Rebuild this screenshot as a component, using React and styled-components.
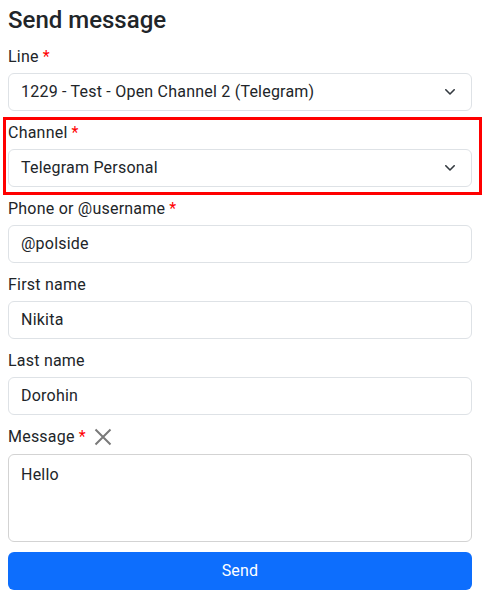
import React from "react";
import styled, { createGlobalStyle } from "styled-components";

const GlobalStyle = createGlobalStyle`
  html, body { margin: 0; padding: 0; background: #fff; }
  body { font-family: Roboto, "Liberation Sans", Arial, sans-serif; color: #212529; }
  * { box-sizing: border-box; }
`;

const Form = styled.form`
  display: flex;
  flex-direction: column;
  gap: 10px;
  width: 464px;
  margin: 0 0 0 8px;
  padding-top: 6px;
`;

const Title = styled.h1`
  margin: 0;
  font-size: 24px;
  font-weight: 500;
  line-height: 1.2;
  color: #212529;
`;

const Group = styled.div`
  position: relative;
  display: flex;
  flex-direction: column;
`;

const Highlight = styled.div`
  position: absolute;
  top: -3.5px;
  left: -5px;
  right: -10px;
  bottom: -8.5px;
  border: 3px solid #ff0000;
  pointer-events: none;
`;

const Label = styled.label`
  display: flex;
  align-items: center;
  font-size: 16px;
  line-height: 24px;
  height: 24px;
  letter-spacing: 0.22px;
  margin-bottom: ${(p) => p.$mb || 4}px;
  color: #212529;
`;

const Required = styled.span`
  color: #ff0000;
  margin-left: 4px;
`;

const ClearButton = styled.button`
  display: inline-flex;
  align-items: center;
  justify-content: center;
  border: 0;
  background: none;
  padding: 0;
  margin-left: 8px;
  width: 18px;
  height: 18px;
  cursor: pointer;
`;

const Input = styled.input`
  height: 38px;
  width: 100%;
  padding: 6px 12px;
  font-family: inherit;
  font-size: 16px;
  line-height: 24px;
  letter-spacing: 0.22px;
  color: #212529;
  border: 1px solid #dee2e6;
  border-radius: 6px;
  background: #fff;
  outline: none;
`;

const SelectBox = styled.div`
  display: flex;
  align-items: center;
  justify-content: space-between;
  height: 38px;
  padding: 6px 16px 6px 12px;
  font-size: 16px;
  line-height: 24px;
  letter-spacing: 0.22px;
  color: #212529;
  border: 1px solid #dee2e6;
  border-radius: 6px;
  background: #fff;
  cursor: pointer;
`;

const TextArea = styled.textarea`
  height: 88px;
  width: 100%;
  padding: 8px 12px;
  font-family: inherit;
  font-size: 16px;
  line-height: 24px;
  letter-spacing: 0.22px;
  color: #212529;
  border: 1px solid #d3d3d3;
  border-radius: 6px;
  resize: none;
  outline: none;
`;

const SendButton = styled.button`
  height: 38px;
  width: 100%;
  border: 0;
  border-radius: 6px;
  background: #0d6efd;
  color: #fff;
  font-family: inherit;
  font-size: 16px;
  line-height: 24px;
  letter-spacing: 0.22px;
  cursor: pointer;
`;

const Chevron = () => (
  <svg width="10" height="6" viewBox="0 0 10 6" fill="none">
    <polyline points="0.8,0.8 5,5 9.2,0.8" stroke="#343a40" strokeWidth="1.6" strokeLinecap="round" strokeLinejoin="round" />
  </svg>
);

const CrossIcon = () => (
  <svg width="18" height="18" viewBox="0 0 18 18" fill="none">
    <path d="M1.5 1.5 L16.5 16.5 M16.5 1.5 L1.5 16.5" stroke="#7a7a7a" strokeWidth="2" />
  </svg>
);

const Select = ({ value }) => (
  <SelectBox role="combobox">
    <span>{value}</span>
    <Chevron />
  </SelectBox>
);

export default function App() {
  return (
    <>
      <GlobalStyle />
      <Form onSubmit={(e) => e.preventDefault()}>
        <Title>Send message</Title>
        <Group>
          <Label>Line<Required>*</Required></Label>
          <Select value="1229 - Test - Open Channel 2 (Telegram)" />
        </Group>
        <Group>
          <Highlight />
          <Label>Channel<Required>*</Required></Label>
          <Select value="Telegram Personal" />
        </Group>
        <Group>
          <Label>Phone or @username<Required>*</Required></Label>
          <Input defaultValue="@polside" />
        </Group>
        <Group>
          <Label>First name</Label>
          <Input defaultValue="Nikita" />
        </Group>
        <Group>
          <Label>Last name</Label>
          <Input defaultValue="Dorohin" />
        </Group>
        <Group>
          <Label $mb={5.5}>
            Message<Required>*</Required>
            <ClearButton type="button" aria-label="Clear"><CrossIcon /></ClearButton>
          </Label>
          <TextArea defaultValue="Hello" />
        </Group>
        <SendButton type="submit">Send</SendButton>
      </Form>
    </>
  );
}
